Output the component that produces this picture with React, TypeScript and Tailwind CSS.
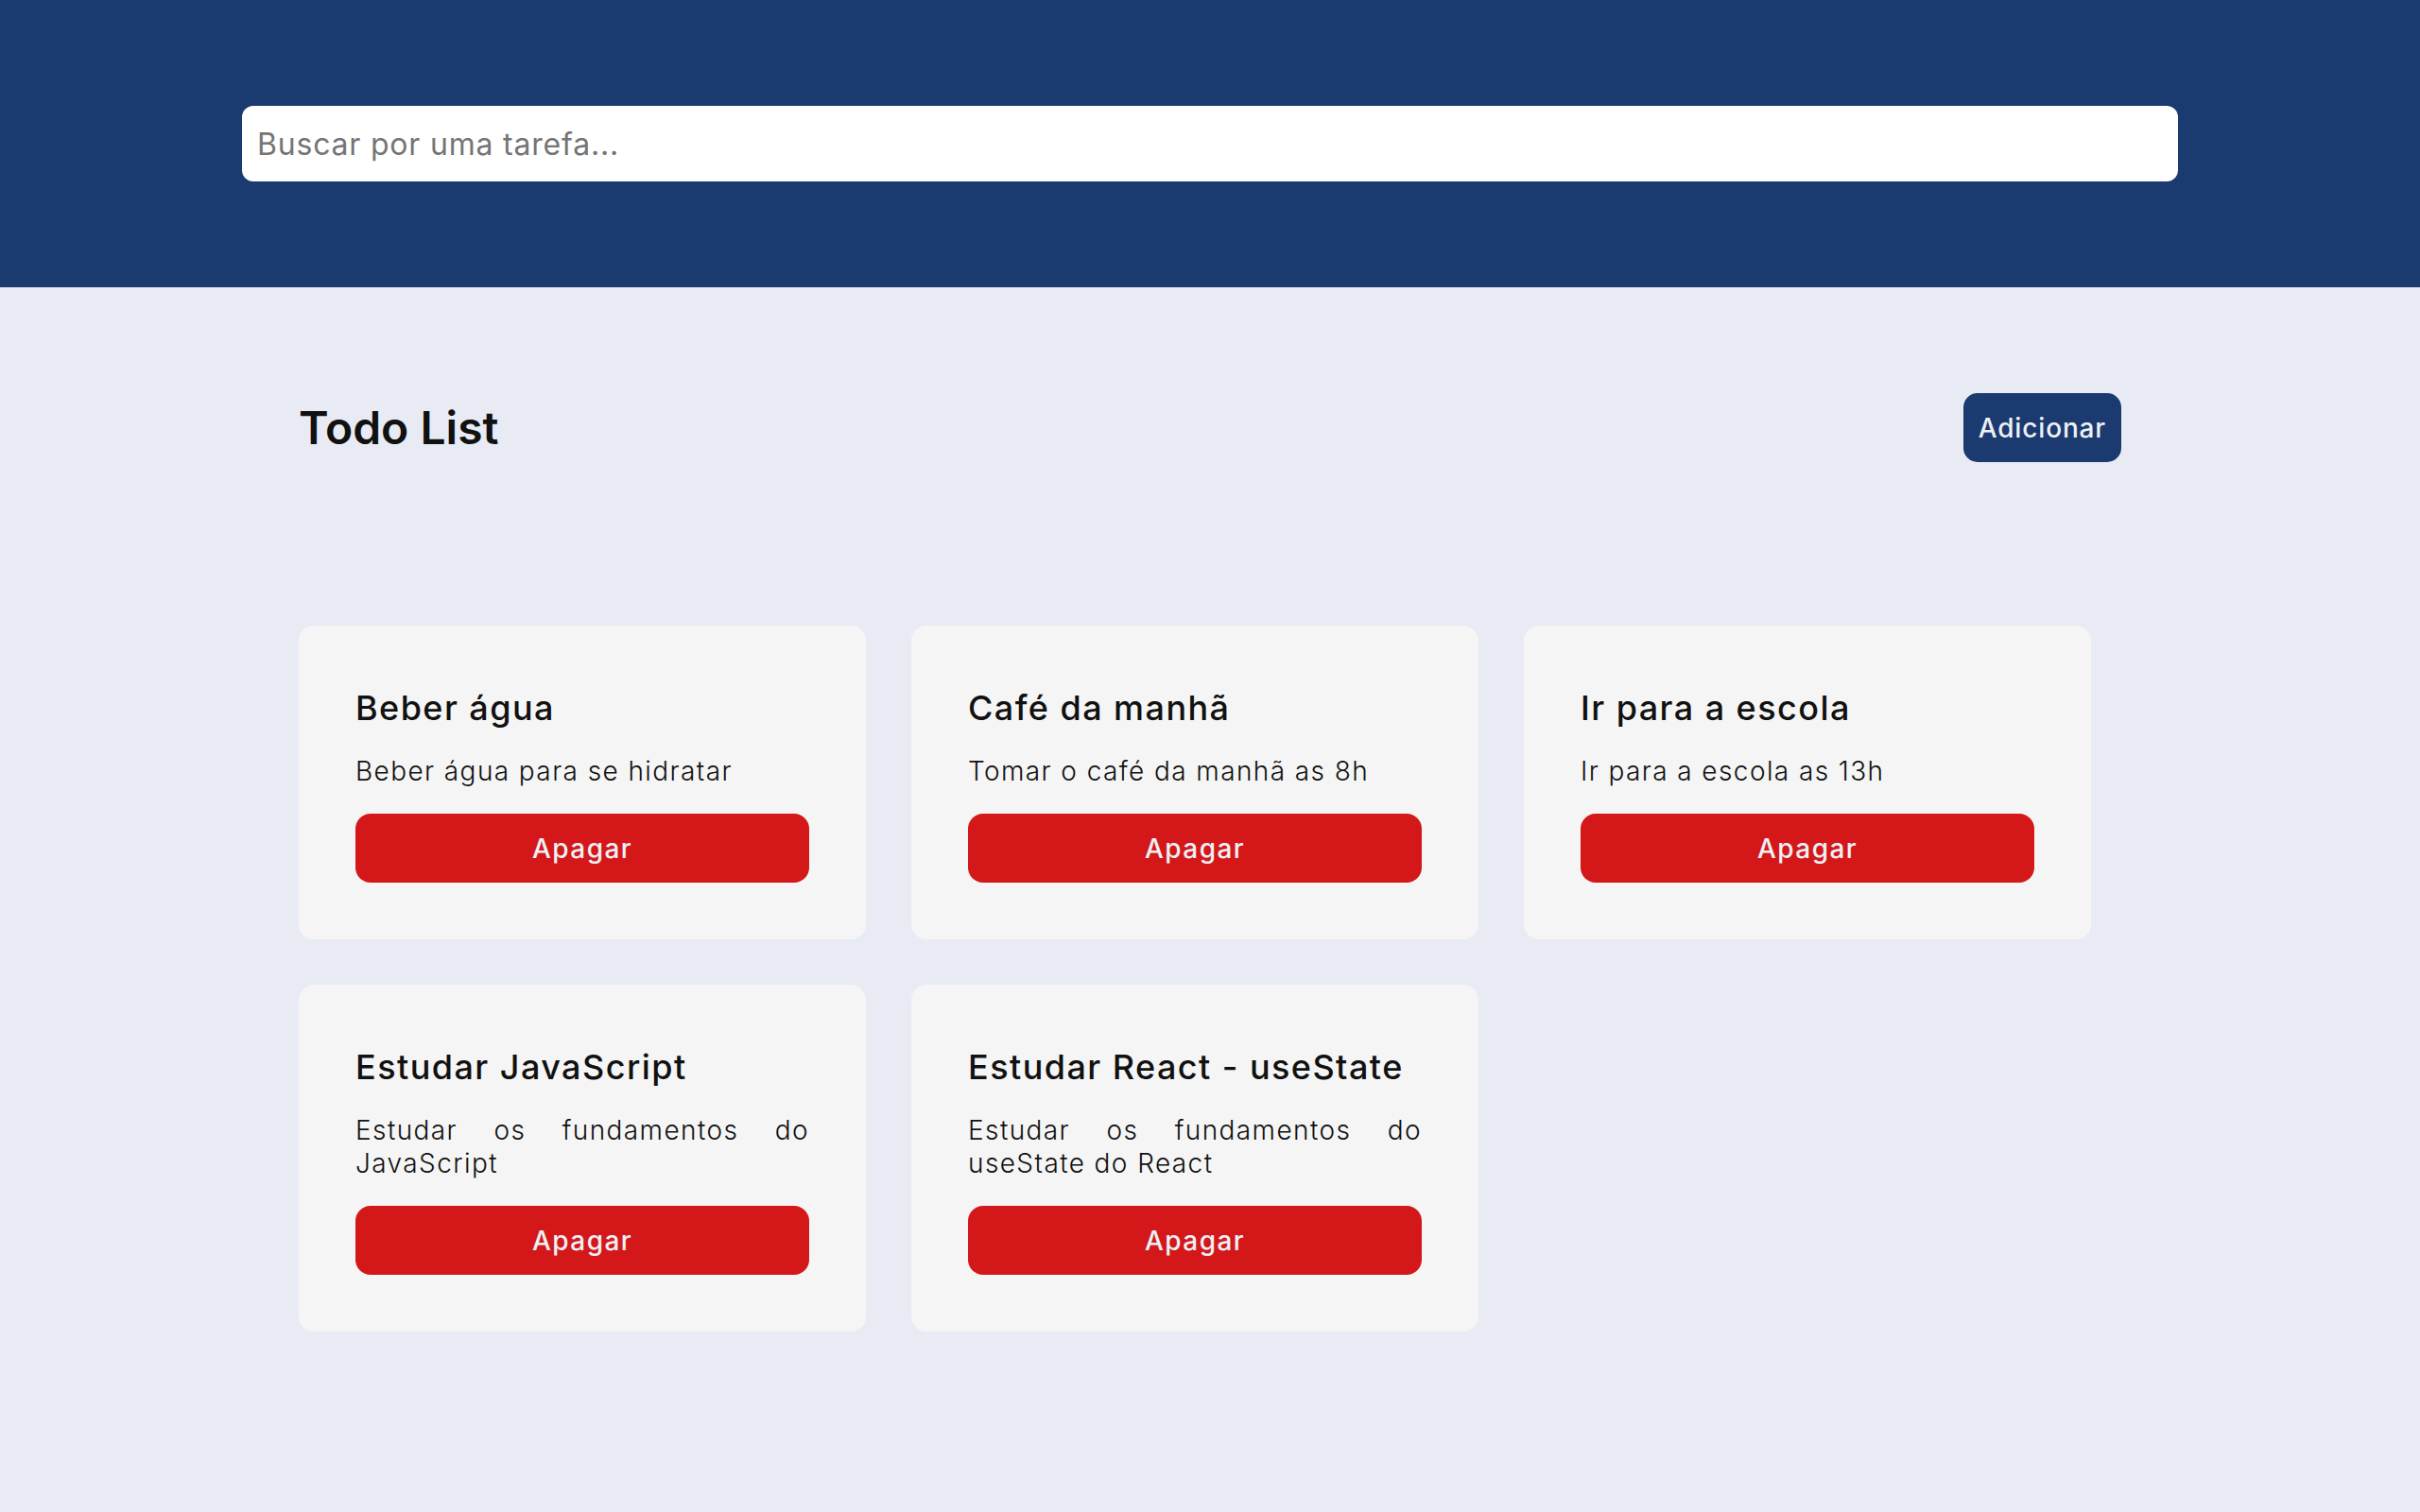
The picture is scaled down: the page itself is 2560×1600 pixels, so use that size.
import { useState } from "react";

interface Todo {
  id: number;
  title: string;
  description: string;
}

const initialTodos: Todo[] = [
  { id: 1, title: "Beber água", description: "Beber água para se hidratar" },
  { id: 2, title: "Café da manhã", description: "Tomar o café da manhã as 8h" },
  { id: 3, title: "Ir para a escola", description: "Ir para a escola as 13h" },
  { id: 4, title: "Estudar JavaScript", description: "Estudar os fundamentos do JavaScript" },
  { id: 5, title: "Estudar React - useState", description: "Estudar os fundamentos do useState do React" },
];

export default function App() {
  const [todos, setTodos] = useState<Todo[]>(initialTodos);
  const [search, setSearch] = useState("");

  const filtered = todos.filter((t) => t.title.toLowerCase().includes(search.toLowerCase()));

  return (
    <div className="min-h-screen bg-[#e8ebf4] font-[Inter,sans-serif] text-[#111111]">
      <header className="flex justify-center bg-[#1b3a6f] py-[112px]">
        <input
          type="text"
          value={search}
          onChange={(e) => setSearch(e.target.value)}
          placeholder="Buscar por uma tarefa..."
          className="h-[80px] w-4/5 rounded-[12px] bg-white px-[16px] text-[32px] tracking-[0.025em] text-[#333] placeholder:text-[#757575] focus:outline-none"
        />
      </header>

      <main className="mx-auto w-4/5 px-[60px]">
        <div className="mt-[112px] flex h-[73px] items-center justify-between">
          <h1 className="text-[48px] leading-[73px] font-semibold">Todo List</h1>
          <button className="h-[73px] rounded-[15px] bg-[#1b3a6f] px-[16px] text-[28px] font-medium tracking-[0.03em] text-[#eef0f6]">
            Adicionar
          </button>
        </div>

        <div className="mt-[173px] flex flex-wrap gap-[48px] pb-[60px]">
          {filtered.map((todo) => (
            <div key={todo.id} className="w-[600px] rounded-[16px] bg-[#f5f5f5] p-[60px]">
              <h3 className="text-[36px] leading-[54px] font-medium tracking-[0.04em]">{todo.title}</h3>
              <p className="mt-[23px] text-justify text-[28px] leading-[35px] font-light tracking-[0.05em]">
                {todo.description}
              </p>
              <button
                onClick={() => setTodos(todos.filter((t) => t.id !== todo.id))}
                className="mt-[27px] h-[73px] w-full rounded-[16px] bg-[#d4181a] text-[28px] font-medium tracking-[0.05em] text-[#eef0f6]"
              >
                Apagar
              </button>
            </div>
          ))}
        </div>
      </main>
    </div>
  );
}
